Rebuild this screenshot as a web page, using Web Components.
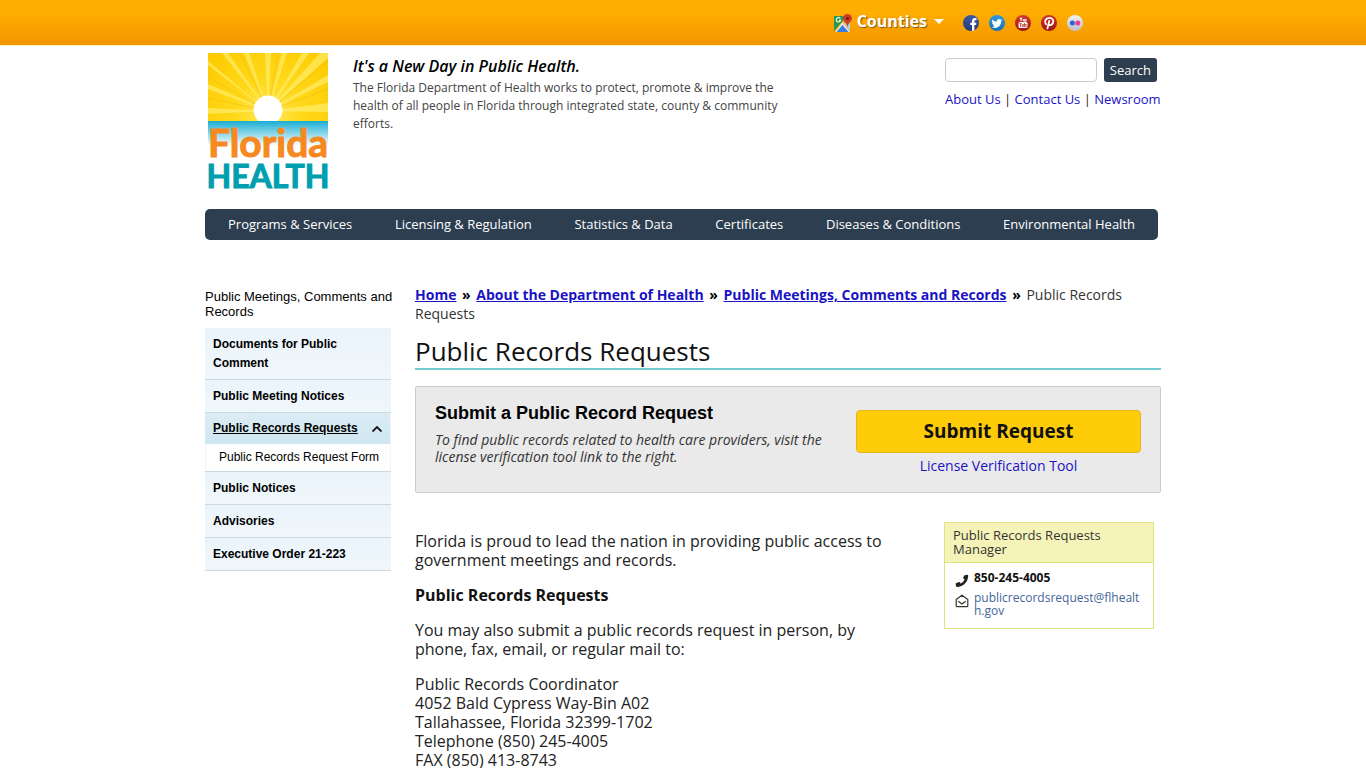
<!DOCTYPE html>
<html lang="en">
<head>
<meta charset="utf-8">
<meta name="viewport" content="width=device-width, initial-scale=1">
<title>Public Records Requests | Florida Department of Health</title>
<style>
  html { scrollbar-width: none; }
  body {
    margin: 0;
    background: #fff;
    color: #222;
    font-family: "Open Sans", "Noto Sans", sans-serif;
    font-size: 16px;
    line-height: 19px;
  }
</style>
</head>
<body>
<health-page></health-page>

<script>
class BaseElement extends HTMLElement {
  constructor() {
    super();
    this.attachShadow({ mode: "open" });
  }
  connectedCallback() {
    const template = document.createElement("template");
    template.innerHTML = `
      <style>
        *, *::before, *::after { box-sizing: border-box; }
        a { color: #1a13c4; text-decoration: none; }
        ${this.getStyles()}
      </style>
      ${this.getTemplate()}`;
    this.shadowRoot.appendChild(template.content.cloneNode(true));
  }
}

class SocialIcon extends BaseElement {
  getTemplate() {
    const icons = {
      Facebook: ["#3b5ba5", "#24397a", `<path fill="#fff" d="M9 16v-6H7.300V7.700H9V6.200C9 4.100 10.200 3 12.200 3h1.300v2.300h-1c-.8 0-1.100.4-1.100 1.100v1.300h2L13.100 10h-1.700v5.500z"/>`],
      Twitter: ["#2d9ce0", "#1672b8", `<path fill="#fff" d="M13.300 5.200c-.5.200-.8.300-1.300.3.500-.3.800-.7 1-1.200-.4.200-.9.400-1.400.5a2.200 2.200 0 0 0-3.800 2C6 6.700 4.400 5.800 3.300 4.500c-.6 1-.3 2.300.7 3-.4 0-.7-.1-1-.3 0 1.100.7 2 1.800 2.300h-1c.3.900 1.100 1.500 2.100 1.500-.9.700-2 1-3.200.9 4.500 2.700 9.500-.4 9.400-5.600.5-.3.900-.7 1.200-1.100z"/>`],
      YouTube: ["#d23a2c", "#9c1712", `<path fill="none" stroke="#fff" stroke-width="1" d="M5 2.500l1 2 1-2M6 4.300v2M8.300 4v2.200M9.700 4v2.200h1.300V4"/><rect x="3.500" y="7" width="9" height="6" rx="1.500" fill="#fff"/><path fill="none" stroke="#c5281f" stroke-width=".8" d="M4.500 8.500h2M5.500 8.500V12M7.200 9v2.700h1.100V9M9.500 8v3.700h1.700V9.500H9.500"/>`],
      Pinterest: ["#d0342e", "#9c1513", `<path fill="none" stroke="#fff" stroke-width="1.800" stroke-linecap="round" d="M8.300 5.800L6.400 13.500M5 9.300C2.800 6.300 4.700 2.900 8.300 2.900c3.200 0 4.800 2.500 3.600 5.100-1.100 2.400-3.600 2.600-4.300 1.200"/>`],
      Flickr: ["#f2f2f2", "#bdbdc4", `<circle cx="5.400" cy="8" r="2.500" fill="#2565d8"/><circle cx="10.800" cy="8" r="2.500" fill="#f23b8c"/>`]
    };
    const name = this.getAttribute("name");
    const [top, bottom, glyph] = icons[name];
    return `
      <a href="#" aria-label="${name}">
        <svg viewBox="0 0 16 16" width="16" height="16">
          <defs><linearGradient id="g" x2="0" y2="1"><stop stop-color="${top}"/><stop offset="1" stop-color="${bottom}"/></linearGradient></defs>
          <circle cx="8" cy="8" r="8" fill="url(#g)"/>${glyph}
        </svg>
      </a>`;
  }
  getStyles() {
    return `
      :host { display: block; }
      a, svg { display: block; }`;
  }
}

class TopBar extends BaseElement {
  getTemplate() {
    return `
      <div class="bar">
        <button class="counties" type="button">
          <svg viewBox="0 0 18 18" width="18" height="18" aria-hidden="true">
            <path fill="#279a50" d="M0 2h13L0 17z"/>
            <path fill="#e7e8e6" d="M8.500 8L1 18h15z"/>
            <path fill="#3a7de0" d="M8.500 11L2.500 18h12z"/>
            <path fill="#b9cce5" d="M10 9l6-2v11z"/>
            <path fill="none" stroke="#fff" stroke-width="1.100" d="M6.300 4.500A2.200 2.200 0 1 0 6.600 6.400H5"/>
            <path fill="#d33b28" d="M13.500 0A4.500 4.500 0 0 1 18 4.500c0 3-4 4-4.500 9-.5-5-4.500-6-4.500-9A4.500 4.500 0 0 1 13.500 0z"/>
            <circle cx="13.500" cy="4.500" r="1.600" fill="#741a15"/>
          </svg>
          <span class="label">
            Counties
            <svg viewBox="0 0 10 5" width="10" height="5" aria-hidden="true"><path fill="#fff" d="M0 0h10L5 5z"/></svg>
          </span>
        </button>
        <nav class="social" aria-label="Social media">
          <social-icon name="Facebook"></social-icon>
          <social-icon name="Twitter"></social-icon>
          <social-icon name="YouTube"></social-icon>
          <social-icon name="Pinterest"></social-icon>
          <social-icon name="Flickr"></social-icon>
        </nav>
      </div>`;
  }
  getStyles() {
    return `
      :host {
        display: block;
        background: linear-gradient(#ffad00 30%, #f29400);
        border-bottom: 1px solid #fff3b5;
      }
      .bar {
        display: flex;
        justify-content: flex-end;
        align-items: center;
        gap: 19px;
        max-width: 956px;
        height: 45px;
        margin: 0 auto;
        padding-right: 78px;
      }
      .counties {
        display: flex;
        align-items: center;
        gap: 5px;
        padding: 0;
        border: 0;
        background: none;
        color: #fff;
        font: bold 16px/20px "Open Sans", sans-serif;
        text-shadow: 1px 1px 1px #7a5a10;
      }
      .label {
        display: flex;
        align-items: center;
        gap: 7px;
        padding-bottom: 3px;
      }
      .social { display: flex; gap: 10px; }`;
  }
}

class HealthLogo extends BaseElement {
  getTemplate() {
    return `
      <svg viewBox="0 0 120 136" width="120" height="136" role="img" aria-label="Florida Health">
        <defs>
          <linearGradient id="sea" x2="0" y2="1"><stop stop-color="#1badd2"/><stop offset=".5" stop-color="#8ad6ea"/><stop offset="1" stop-color="#fff"/></linearGradient>
          <radialGradient id="sky" gradientUnits="userSpaceOnUse" cx="60" cy="60" r="80"><stop stop-color="#ffe75c"/><stop offset=".4" stop-color="#ffd91c"/><stop offset="1" stop-color="#fdcb00"/></radialGradient>
          <clipPath id="frame"><path d="M0 0h120v68H0z"/></clipPath>
        </defs>
        <path fill="url(#sky)" d="M0 0h120v68H0z"/>
        <g clip-path="url(#frame)" fill="#fff17a" opacity=".6">
          <path d="M60 58L14 0h6zM60 58L36 0h5zM60 58L57 0h6zM60 58L74 0h5zM60 58l34-58h7zM60 58L112 0h8v5zM60 58l60-36v7zM60 58l60-8v9zM60 58L0 31v5zM60 58L0 55v6zM60 58L0 8v4z"/>
        </g>
        <g clip-path="url(#frame)" stroke="#edae00" stroke-width=".6" opacity=".6">
          <path d="M60 58L0 24M60 58L32 0M60 58L70 0M60 58l60-50M60 58l60-22M60 58L0 45"/>
        </g>
        <circle cx="60" cy="57" r="14.500" fill="#fff"/>
        <path fill="url(#sea)" d="M0 68h120v25H0z"/>
        <g font-family="Lato, sans-serif" font-weight="bold" text-anchor="middle">
          <text x="60" y="104" font-size="39" fill="#f6891f" stroke="#f6891f" stroke-width="1">Florida</text>
          <text x="60" y="135" font-size="32" fill="#009faf" stroke="#009faf" stroke-width="1">HEALTH</text>
        </g>
      </svg>`;
  }
  getStyles() {
    return `
      :host { display: block; flex: none; }
      svg { display: block; overflow: visible; }`;
  }
}

class SiteHeader extends BaseElement {
  getTemplate() {
    return `
      <header>
        <health-logo></health-logo>
        <div class="about">
          <h2>It's a New Day in Public Health.</h2>
          <p>The Florida Department of Health works to protect, promote &amp; improve the health of all people in Florida through integrated state, county &amp; community efforts.</p>
        </div>
        <div class="tools">
          <form onsubmit="return false">
            <input type="search" aria-label="Search this site">
            <button type="submit">Search</button>
          </form>
          <div class="links"><a href="#">About Us</a> | <a href="#">Contact Us</a> | <a href="#">Newsroom</a></div>
        </div>
      </header>`;
  }
  getStyles() {
    return `
      :host { display: block; }
      header { display: flex; padding: 7px 4px 20px 3px; }
      .about { width: 430px; margin: 4px 0 0 25px; }
      h2 {
        margin: 0;
        color: #000;
        font-size: 16px;
        font-style: italic;
        font-weight: 600;
        line-height: 18px;
      }
      p { margin: 4px 0 0; color: #444; font-size: 12px; line-height: 18px; }
      .tools { width: 212px; margin: 5px 0 0 auto; }
      form { display: flex; gap: 7px; }
      input {
        flex: 1;
        min-width: 0;
        height: 24px;
        border: 1px solid #ccc;
        border-radius: 4px;
        background: #fff;
      }
      button {
        height: 24px;
        padding: 0 6px;
        border: 0;
        border-radius: 3px;
        background: #2c3e50;
        color: #fff;
        font: 13px/20px "Open Sans", sans-serif;
      }
      .links { margin-top: 8px; font-size: 13px; line-height: 18px; white-space: nowrap; }`;
  }
}

class MainNav extends BaseElement {
  getTemplate() {
    return `
      <nav>
        <a href="#">Programs &amp; Services</a>
        <a href="#">Licensing &amp; Regulation</a>
        <a href="#">Statistics &amp; Data</a>
        <a href="#">Certificates</a>
        <a href="#">Diseases &amp; Conditions</a>
        <a href="#">Environmental Health</a>
      </nav>`;
  }
  getStyles() {
    return `
      :host { display: block; margin-right: 3px; }
      nav {
        display: flex;
        justify-content: space-between;
        padding: 0 23px;
        border-radius: 5px;
        background: #2c3e50;
      }
      a { color: #fff; font-size: 13px; line-height: 31px; }`;
  }
}

class SideItem extends BaseElement {
  getTemplate() {
    const arrow = `<svg viewBox="0 0 10 6" width="10" height="6" aria-hidden="true"><path fill="none" stroke="#111" stroke-width="1.800" d="M.5 5.500L5 1l4.500 4.500"/></svg>`;
    return `
      <a href="#"><slot></slot>${this.hasAttribute("open") ? arrow : ""}</a>
      <slot name="sub"></slot>`;
  }
  getStyles() {
    return `
      :host { display: block; border-bottom: 1px solid #ccd9e0; }
      a {
        display: flex;
        justify-content: space-between;
        align-items: center;
        padding: 7px 8px 6px;
        background: linear-gradient(#eaf4fa, #f0f7fc);
        color: #000;
        font-size: 12px;
        font-weight: bold;
        line-height: 19px;
      }
      :host([open]) a {
        margin-right: 1px;
        padding: 6px 8px;
        background: linear-gradient(#dbecf5, #cfe7f1);
        text-decoration: underline;
      }
      ::slotted([slot="sub"]) {
        display: block;
        margin: 0 1px;
        padding: 4px 0 4px 13px;
        background: #fff;
        font-size: 12px;
        line-height: 19px;
      }`;
  }
}

class SideMenu extends BaseElement {
  getTemplate() {
    return `
      <aside>
        <h2>Public Meetings, Comments and Records</h2>
        <nav>
          <side-item>Documents for Public Comment</side-item>
          <side-item>Public Meeting Notices</side-item>
          <side-item open>Public Records Requests<a slot="sub" href="#">Public Records Request Form</a></side-item>
          <side-item>Public Notices</side-item>
          <side-item>Advisories</side-item>
          <side-item>Executive Order 21-223</side-item>
        </nav>
      </aside>`;
  }
  getStyles() {
    return `
      :host { display: block; font-family: "Liberation Sans", Arial, sans-serif; }
      h2 { margin: 0 -10px 9px 0; color: #000; font-size: 13px; font-weight: normal; line-height: 15px; }
      nav { background: #eef6fb; }
      nav a { color: #000; }`;
  }
}

class BreadCrumbs extends BaseElement {
  getTemplate() {
    return `
      <nav aria-label="Breadcrumb"><a href="#">Home</a> <b>»</b> <a href="#">About the Department of Health</a> <b>»</b> <a href="#">Public Meetings, Comments and Records</a> <b>»</b> Public Records Requests</nav>`;
  }
  getStyles() {
    return `
      :host { display: block; font-size: 14px; line-height: 19px; color: #333; }
      b { margin: 0 2px; color: #000; }
      a { font-weight: bold; text-decoration: underline; }`;
  }
}

class RequestPanel extends BaseElement {
  getTemplate() {
    return `
      <section>
        <div class="text">
          <h2>Submit a Public Record Request</h2>
          <p>To find public records related to health care providers, visit the license verification tool link to the right.</p>
        </div>
        <div class="actions">
          <button type="button">Submit Request</button>
          <a href="#">License Verification Tool</a>
        </div>
      </section>`;
  }
  getStyles() {
    return `
      :host { display: block; }
      section {
        display: flex;
        gap: 20px;
        padding: 16px 19px;
        border: 1px solid #ccc;
        border-radius: 2px;
        background: #eaeaea;
      }
      .text { flex: 1; }
      h2 {
        margin: 0 0 8px;
        color: #000;
        font: bold 18px/20px "Liberation Sans", Arial, sans-serif;
      }
      p { margin: 0; font-size: 14px; font-style: italic; line-height: 17px; color: #333; }
      .actions {
        display: flex;
        flex-direction: column;
        align-items: center;
        gap: 3px;
        width: 285px;
        margin-top: 7px;
      }
      button {
        width: 100%;
        height: 43px;
        padding: 0 0 2px;
        border: 1px solid #e3b71c;
        border-radius: 4px;
        background: #ffcc0a;
        color: #111;
        font: bold 19px/26px "Open Sans", sans-serif;
      }
      .actions a { font-size: 14px; line-height: 20px; }`;
  }
}

class ContactCard extends BaseElement {
  getTemplate() {
    return `
      <aside>
        <h3>Public Records Requests Manager</h3>
        <ul>
          <li>
            <svg viewBox="0 0 14 14" width="14" height="14" aria-hidden="true"><path fill="#222" d="M9.800 1.200l2.500-.5c.6 0 .9.300.9.900C13.200 8 8.300 13 2 13c-.5 0-.8-.2-.9-.7L.6 10c0-.4.100-.7.500-.8L3.800 8c.4-.100.700 0 .9.200l1 1.200c1.800-.9 3.100-2.200 3.900-3.900L8.400 4.500c-.3-.2-.3-.5-.2-.9l1.100-2z"/></svg>
            <b>850-245-4005</b>
          </li>
          <li>
            <svg viewBox="0 0 14 14" width="14" height="14" aria-hidden="true"><path fill="none" stroke="#333" stroke-width="1.200" stroke-linejoin="round" d="M1.200 5.500L7 1.200l5.800 4.300v6.300c0 .6-.3.900-.9.900H2.100c-.6 0-.9-.3-.9-.9zM3.300 7.200L7 10l3.700-2.800"/></svg>
            <a href="#">publicrecordsrequest@flhealth.gov</a>
          </li>
        </ul>
      </aside>`;
  }
  getStyles() {
    return `
      :host { display: block; }
      aside { border: 1px solid #dfe383; }
      h3 {
        margin: 0;
        padding: 5px 8px 6px;
        border-bottom: 1px solid #dfe383;
        background: #f5f3b8;
        color: #333;
        font-size: 13px;
        font-weight: normal;
        line-height: 14px;
      }
      ul {
        display: grid;
        gap: 3px;
        margin: 0;
        padding: 8px 12px 11px 10px;
        list-style: none;
        font-size: 12px;
        line-height: 13px;
      }
      li { display: flex; gap: 5px; }
      svg { flex: none; margin-top: 3px; }
      li b { color: #111; }
      li a { min-width: 0; color: #446699; word-break: break-all; }`;
  }
}

class HealthPage extends BaseElement {
  getTemplate() {
    return `
      <top-bar></top-bar>
      <div class="wrap">
        <site-header></site-header>
        <main-nav></main-nav>
        <div class="columns">
          <side-menu></side-menu>
          <main>
            <bread-crumbs></bread-crumbs>
            <h1>Public Records Requests</h1>
            <request-panel></request-panel>
            <div class="content">
              <article>
                <p>Florida is proud to lead the nation in providing public access to government meetings and records.</p>
                <p><b>Public Records Requests</b></p>
                <p>You may also submit a public records request in person, by phone, fax, email, or regular mail to:</p>
                <p>Public Records Coordinator<br>4052 Bald Cypress Way-Bin A02<br>Tallahassee, Florida 32399-1702<br>Telephone (850) 245-4005<br>FAX (850) 413-8743</p>
              </article>
              <contact-card></contact-card>
            </div>
          </main>
        </div>
      </div>`;
  }
  getStyles() {
    return `
      :host { display: block; }
      .wrap { max-width: 956px; margin: 0 auto; }
      .columns {
        display: grid;
        grid-template-columns: 186px minmax(0, 1fr);
        align-items: start;
        gap: 24px;
        padding-top: 49px;
      }
      main { margin-top: -4px; }
      h1 {
        margin: 12px 0 16px;
        border-bottom: 2px solid #74cbcf;
        color: #111;
        font-size: 26px;
        font-weight: 400;
        line-height: 33px;
      }
      .content {
        display: grid;
        grid-template-columns: minmax(0, 1fr) 210px;
        align-items: start;
        gap: 38px;
        margin: 29px 7px 0 0;
      }
      article { margin-top: 10px; }
      p { margin: 0 0 16px; }
      p b { color: #111; }`;
  }
}

customElements.define("social-icon", SocialIcon);
customElements.define("top-bar", TopBar);
customElements.define("health-logo", HealthLogo);
customElements.define("site-header", SiteHeader);
customElements.define("main-nav", MainNav);
customElements.define("side-item", SideItem);
customElements.define("side-menu", SideMenu);
customElements.define("bread-crumbs", BreadCrumbs);
customElements.define("request-panel", RequestPanel);
customElements.define("contact-card", ContactCard);
customElements.define("health-page", HealthPage);
</script>
</body>
</html>
